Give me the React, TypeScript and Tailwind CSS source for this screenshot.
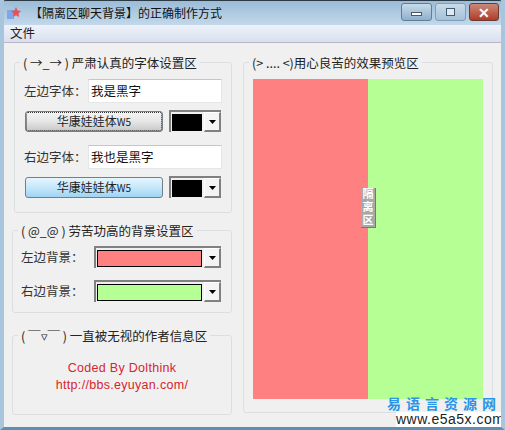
import type { ReactNode } from "react";

const FONT = "font-['Noto_Sans_CJK_SC','Liberation_Sans',sans-serif]";

function Group({ title, className, children }: { title: string; className: string; children: ReactNode }) {
  return (
    <fieldset className={`border border-[#dcdfe2] rounded-[3px] ${className}`}>
      <legend className="ml-[5px] px-[3px] text-[12.5px] leading-[17px] text-[#222] whitespace-pre">{title}</legend>
      {children}
    </fieldset>
  );
}

function Arrow() {
  return (
    <div className="w-[17px] self-stretch bg-[#f4f4f4] border-t border-l border-white border-r-2 border-b-2 border-r-[#808080] border-b-[#808080] flex items-center justify-center">
      <svg width="7" height="4" viewBox="0 0 7 4"><path d="M0 0h7L3.500 4z" fill="#000" /></svg>
    </div>
  );
}

function ColorPick({ color, className }: { color: string; className: string }) {
  return (
    <div className={`h-[22px] flex border-l-2 border-t-2 border-[#808080] bg-[#f0f0f0] ${className}`}>
      <div className="flex-1 flex items-center pl-[1px] pr-[2px]">
        <div className="w-full h-[17px] border border-black" style={{ background: color }} />
      </div>
      <Arrow />
    </div>
  );
}

function Row({ label, value }: { label: string; value: string }) {
  return (
    <div className="flex items-center h-[24px]">
      <span className="w-[73px] pl-[9px] text-[12.5px] whitespace-nowrap text-[#333]">{label}</span>
      <div className="w-[134px] h-[24px] bg-white border border-[#e4e6e8] border-t-[#c4c6c8] pl-[2px] text-[12.5px] leading-[22px] text-[#111]">{value}</div>
    </div>
  );
}

function FontButton({ focused }: { focused?: boolean }) {
  return (
    <div className={`w-[138px] h-[21px] rounded-[3px] border border-[#6f7f8c] flex items-center justify-center text-[12px] text-[#222] ${focused ? "bg-gradient-to-b from-[#f4f4f4] via-[#e6e6e6] to-[#c8c8c8] outline-1 outline-dotted outline-[#333] -outline-offset-2" : "bg-gradient-to-b from-[#e6f5fd] via-[#c6e7fa] to-[#9fd4f3]"}`}>
      华康娃娃体<span className="text-[10px]">W5</span>
    </div>
  );
}

export default function App() {
  return (
    <div className={`${FONT} relative w-[505px] h-[430px] overflow-hidden flex flex-col bg-[#f0f0f0] border-x-[4px] border-b-[3px] border-x-[#a9c5de] border-b-[#5f8fae]`}>
      {/* Title bar */}
      <div className="-mx-[4px] h-[25px] shrink-0 flex items-center bg-gradient-to-b from-[#9bbcd8] to-[#c3d8ea] border-t border-[#2b3a44] rounded-t-[6px]">
        <div className="w-[24px] pl-[7px]">
          <svg width="14" height="14" viewBox="0 0 14 14">
            <rect x="0" y="4" width="7" height="9" fill="#7fa6e6" />
            <path d="M9 1l1.500 3.500L14 5l-2.500 2.500.6 3.500L9 9.300 6 11l.6-3.500L4 5l3.500-.5z" fill="#e8505a" />
          </svg>
        </div>
        <span className="text-[12px] text-[#111] whitespace-nowrap ml-[6px]">【隔离区聊天背景】的正确制作方式</span>
        <div className="ml-auto mr-[6px] flex gap-[3px] mt-[-2px]">
          <div className="w-[31px] h-[18px] rounded-[3px] border border-[#5d7d99] bg-gradient-to-b from-[#c9dbea] to-[#8fb0cc] flex items-end justify-center pb-[4px]">
            <div className="w-[11px] h-[4px] bg-white border border-[#44596b]" />
          </div>
          <div className="w-[31px] h-[18px] rounded-[3px] border border-[#7f9db7] bg-gradient-to-b from-[#c9dbea] to-[#a5c1d8] flex items-center justify-center">
            <div className="w-[9px] h-[8px] bg-[#dfe9f1] border border-[#44596b]" />
          </div>
          <div className="w-[30px] h-[18px] rounded-[3px] border border-[#6b3a34] bg-gradient-to-b from-[#c98878] to-[#b03a28] flex items-center justify-center text-white text-[14px] font-bold leading-none">✕</div>
        </div>
      </div>
      {/* Menu */}
      <div className="h-[18px] shrink-0 flex items-center bg-gradient-to-b from-[#eef2fa] to-[#d9e0ee] border-b border-[#b3b8c4] pl-[6px] text-[12.5px] text-[#222]">文件</div>
      {/* Body */}
      <div className="flex-1 flex pl-[10px] pt-[11px] gap-[11px]">
        <div className="w-[218px] flex flex-col">
          <Group title="( →_→ ) 严肃认真的字体设置区" className="h-[159px] pt-[8px]">
            <Row label="左边字体：" value="我是黑字" />
            <div className="flex items-center mt-[7px] pl-[10px] gap-[6px]">
              <FontButton focused />
              <ColorPick color="#000" className="w-[52px]" />
            </div>
            <div className="mt-[13px]"><Row label="右边字体：" value="我也是黑字" /></div>
            <div className="flex items-center mt-[7px] pl-[10px] gap-[6px]">
              <FontButton />
              <ColorPick color="#000" className="w-[52px]" />
            </div>
          </Group>
          <Group title="( @_@ ) 劳苦功高的背景设置区" className="h-[91px] mt-[9px] -ml-[2px] pt-[7px]">
            <div className="flex items-center pl-[8px]">
              <span className="w-[73px] text-[12.5px] text-[#333]">左边背景：</span>
              <ColorPick color="#ff8080" className="w-[127px]" />
            </div>
            <div className="flex items-center pl-[8px] mt-[12px]">
              <span className="w-[73px] text-[12.5px] text-[#333]">右边背景：</span>
              <ColorPick color="#b5ff95" className="w-[127px]" />
            </div>
          </Group>
          <Group title="( ￣▿￣ ) 一直被无视的作者信息区" className="h-[88px] mt-[14px] -ml-[2px]">
            <div className="pt-[16px] flex flex-col items-center text-[12.5px] leading-[17px] text-[#d8242e]">
              <span className="font-['Liberation_Sans'] tracking-[0.3px]">Coded By Dolthink</span>
              <span className="font-['Liberation_Sans'] tracking-[0.3px]">http://bbs.eyuyan.com/</span>
            </div>
          </Group>
        </div>
        <Group title="(> .... <)用心良苦的效果预览区" className="w-[250px] h-[359px]">
          <div className="ml-[9px] mt-[8px] w-[230px] h-[320px] flex">
            <div className="w-[115px] h-full bg-[#ff8080]" />
            <div className="w-[115px] h-full bg-[#b5ff95]" />
          </div>
        </Group>
      </div>
      {/* Divider handle */}
      <div className="absolute left-[357px] top-[188px] w-[15px] h-[40px] bg-[#a8a8a8] text-white font-bold text-[11px] leading-[15px] tracking-[2px] flex justify-center border-r border-b border-[#777] [writing-mode:vertical-rl]">
        隔离区
      </div>
      {/* Watermark */}
      <div className="absolute right-[0px] bottom-[0px] flex flex-col items-end">
        <span className="font-bold text-[14px] leading-[15px] tracking-[5px] text-[#2b94e4] whitespace-nowrap">易语言资源网</span>
        <span className="w-[105px] mt-[1px] pb-[1px] bg-white font-['Liberation_Sans'] text-[14px] leading-[14px] tracking-[0.5px] text-[#222] whitespace-nowrap">www.e5a5x.com</span>
      </div>
    </div>
  );
}
